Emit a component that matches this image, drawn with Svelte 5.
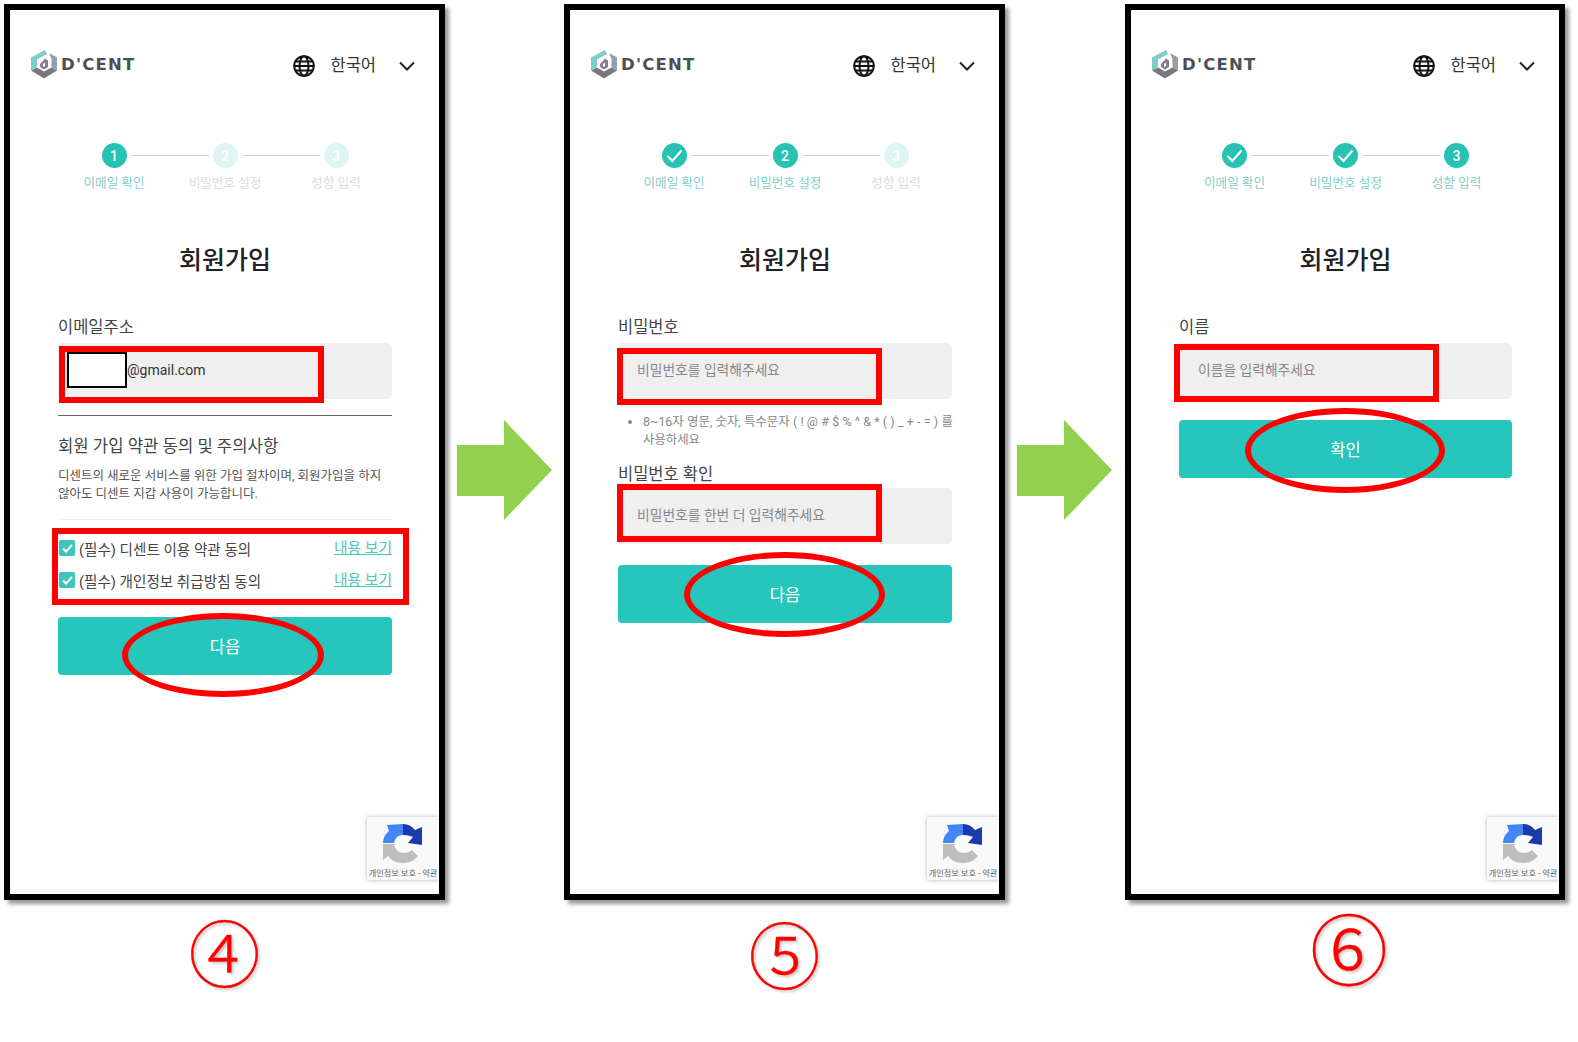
<script>
  const steps = ["이메일 확인", "비밀번호 설정", "성함 입력"];
</script>

{#snippet logo()}
  <div class="logo">
    <svg width="28" height="30" viewBox="0 0 28 30">
      <polygon points="1,8.5 15,1 17,5 7,10.5 7,18 1,21.5" fill="#7fcdc6" />
      <polygon points="19,4 27,8.5 27,21.5 21.5,18.5 21.5,10" fill="#9a9ca0" />
      <polygon points="1,21.5 7,18.5 14,22.5 21.5,18.5 27,21.5 14,29.5" fill="#77797e" />
      <polygon points="10,15 15,9.5 18,11.5 18,18 14,20.5 10,18" fill="#808287" />
      <polygon points="13,15 15,13.5 15,17 13,18" fill="#fff" />
    </svg>
    <span class="wordmark">D'CENT</span>
  </div>
{/snippet}

{#snippet globe()}
  <svg class="globe" width="22" height="22" viewBox="0 0 22 22" fill="none" stroke="#111" stroke-width="2">
    <circle cx="11" cy="11" r="9.8" />
    <ellipse cx="11" cy="11" rx="4.5" ry="9.8" />
    <path d="M1.5 11h19M3 6.5h16M3 15.5h16" />
  </svg>
{/snippet}

{#snippet header()}
  <header class="top">
    {@render logo()}
    <div class="lang">
      {@render globe()}
      <span class="lang-name">한국어</span>
      <svg width="16" height="10" viewBox="0 0 16 10" fill="none" stroke="#222" stroke-width="2">
        <path d="M1 1.5l7 7 7-7" />
      </svg>
    </div>
  </header>
{/snippet}

{#snippet stepper(current)}
  <div class="track">
    {#each steps as _, i}
      {#if i > 0}<span class="line"></span>{/if}
      <span class="dot" class:on={i <= current} class:off={i > current}>
        {#if i < current}
          <svg width="17" height="14" viewBox="0 0 17 14" fill="none" stroke="#fff" stroke-width="2.2">
            <path d="M1.5 7l5 5 9-10.5" />
          </svg>
        {:else}
          {i + 1}
        {/if}
      </span>
    {/each}
  </div>
  <div class="step-names">
    {#each steps as name, i}
      <span class:lit={i <= current}>{name}</span>
    {/each}
  </div>
  <h1>회원가입</h1>
{/snippet}

{#snippet recaptcha()}
  <div class="badge">
    <svg width="40" height="40" viewBox="0 0 40 40">
      <path d="M20 0C25 0 29 2 32 6L39 3V21L25 19L30 13C28 12 25 11 20 11Z" fill="#1c3aa9" />
      <path d="M20 0V11C15 11 12 14 11 19H0C0 14 2 10 6 7L4 1Z" fill="#4285f4" />
      <path d="M0 20H11C12 26 16 29 21 29C24 29 27 28 29 26L35 32C31 37 26 39 20 39C13 39 8 36 5 32L0 36Z" fill="#bdbdbd" />
      <path d="M20 11l-3 4 3 2 3-2z" fill="#fff" />
    </svg>
    <span>개인정보 보호 - 약관</span>
  </div>
{/snippet}

{#snippet arrow()}
  <div class="arrow">
    <svg width="96" height="100" viewBox="0 0 96 100">
      <polygon points="0,25 47,25 47,0 95,50 47,100 47,76 0,76" fill="#92d050" />
    </svg>
  </div>
{/snippet}

<div class="sheet">
  <!-- step 4 -->
  <section class="figure">
    <div class="screen">
      {@render header()}
      <div class="body">
        {@render stepper(0)}
        <label class="label" for="mail">이메일주소</label>
        <input id="mail" class="field email" value="@gmail.com" />
        <hr class="rule" />
        <h2>회원 가입 약관 동의 및 주의사항</h2>
        <p class="notice">디센트의 새로운 서비스를 위한 가입 절차이며, 회원가입을 하지<br />않아도 디센트 지갑 사용이 가능합니다.</p>
        <hr class="rule light" />
        <div class="agree first">
          <span class="check"><svg width="11" height="9" viewBox="0 0 11 9" fill="none" stroke="#fff" stroke-width="2"><path d="M1 4.5l3 3 6-6.5" /></svg></span>
          <span class="agree-text">(필수) 디센트 이용 약관 동의</span>
          <a href="#terms">내용 보기</a>
        </div>
        <div class="agree">
          <span class="check"><svg width="11" height="9" viewBox="0 0 11 9" fill="none" stroke="#fff" stroke-width="2"><path d="M1 4.5l3 3 6-6.5" /></svg></span>
          <span class="agree-text">(필수) 개인정보 취급방침 동의</span>
          <a href="#privacy">내용 보기</a>
        </div>
        <button>다음</button>
      </div>
      {@render recaptcha()}
      <div class="mark a1"></div>
      <div class="redact"></div>
      <div class="mark a2"></div>
      <div class="ring a3"></div>
    </div>
    <div class="num n4">④</div>
  </section>

  {@render arrow()}

  <!-- step 5 -->
  <section class="figure">
    <div class="screen">
      {@render header()}
      <div class="body">
        {@render stepper(1)}
        <label class="label" for="pw">비밀번호</label>
        <input id="pw" class="field" placeholder="비밀번호를 입력해주세요" />
        <ul class="hint">
          <li>8~16자 영문, 숫자, 특수문자 ( ! @ # $ % ^ & * ( ) _ + - = ) 를<br />사용하세요</li>
        </ul>
        <label class="label second" for="pw2">비밀번호 확인</label>
        <input id="pw2" class="field" placeholder="비밀번호를 한번 더 입력해주세요" />
        <button>다음</button>
      </div>
      {@render recaptcha()}
      <div class="mark b1"></div>
      <div class="mark b2"></div>
      <div class="ring b3"></div>
    </div>
    <div class="num n5">⑤</div>
  </section>

  {@render arrow()}

  <!-- step 6 -->
  <section class="figure last">
    <div class="screen">
      {@render header()}
      <div class="body">
        {@render stepper(2)}
        <label class="label" for="name">이름</label>
        <input id="name" class="field" placeholder="이름을 입력해주세요" />
        <button>확인</button>
      </div>
      {@render recaptcha()}
      <div class="mark c1"></div>
      <div class="ring c2"></div>
    </div>
    <div class="num n6">⑥</div>
  </section>
</div>

<style>
  :global(body) {
    background: #fff;
  }
  .sheet {
    display: flex;
    align-items: flex-start;
    width: 1578px;
    height: 1042px;
    padding: 4px 0 0 4px;
    box-sizing: border-box;
    overflow: hidden;
    font-family: Roboto, "Noto Sans CJK KR", sans-serif;
    color: #444;
  }
  .figure {
    width: 441px;
    flex: none;
  }
  .figure.last {
    width: 440px;
    margin-left: 1px;
  }
  .screen {
    position: relative;
    height: 896px;
    box-sizing: border-box;
    border: 6px solid #000;
    background: #fff;
    box-shadow: 4px 4px 4px rgba(0, 0, 0, 0.4);
  }
  .arrow {
    width: 119px;
    flex: none;
    padding: 416px 0 0 12px;
    box-sizing: border-box;
  }
  .arrow svg {
    display: block;
  }

  .top {
    display: flex;
    justify-content: space-between;
    align-items: center;
    height: 28px;
    margin-top: 40px;
    padding: 0 24px 0 20px;
  }
  .logo {
    display: flex;
    align-items: center;
    gap: 3px;
  }
  .logo svg {
    display: block;
  }
  .wordmark {
    font-family: "DejaVu Sans", sans-serif;
    font-size: 16.5px;
    font-weight: 700;
    letter-spacing: 1.2px;
    color: #4c4e56;
  }
  .lang {
    display: flex;
    align-items: center;
    padding-top: 3px;
  }
  .globe {
    display: block;
  }
  .lang-name {
    font-size: 16.5px;
    line-height: 22px;
    margin: 1px 23px 0 15px;
    color: #333;
  }

  .body {
    padding: 0 47px 0 48px;
  }
  .track {
    display: flex;
    justify-content: center;
    align-items: center;
    gap: 4px;
    margin-top: 65px;
  }
  .dot {
    width: 25px;
    height: 25px;
    border-radius: 50%;
    display: flex;
    align-items: center;
    justify-content: center;
    font-size: 14px;
    font-weight: 500;
    color: #fff;
    flex: none;
  }
  .dot.on {
    background: #26c3b5;
  }
  .dot.off {
    background: #def5f2;
  }
  .line {
    width: 78px;
    height: 1px;
    background: #d0d0d0;
  }
  .step-names {
    display: grid;
    grid-template-columns: repeat(3, 111px);
    justify-content: center;
    margin-top: 6px;
    font-size: 12.6px;
    line-height: 18px;
    text-align: center;
    color: #dbdbdb;
    white-space: nowrap;
  }
  .step-names .lit {
    color: #7fcfc7;
  }
  h1 {
    margin: 51px 0 0;
    font-size: 25px;
    line-height: 36px;
    font-weight: 500;
    text-align: center;
    color: #222;
  }
  .label {
    display: block;
    margin-top: 37px;
    margin-bottom: 3px;
    font-size: 16.5px;
    line-height: 24px;
    color: #444;
  }
  .label.second {
    margin-top: 14px;
    margin-bottom: 1px;
  }
  .field {
    display: block;
    width: 100%;
    height: 56px;
    box-sizing: border-box;
    border: 0;
    border-radius: 5px;
    padding: 0 19px 2px;
    background: #efefef;
    font: inherit;
    font-size: 13.8px;
    color: #333;
    outline: none;
  }
  .field::placeholder {
    color: #888;
    opacity: 1;
  }
  .field.email {
    padding-left: 69px;
    font-size: 14px;
  }
  .rule {
    margin: 16px 0 0;
    border: 0;
    height: 1px;
    background: #666;
  }
  .rule.light {
    margin-top: 16px;
    background: #eee;
  }
  h2 {
    margin: 19px 0 0;
    font-size: 16.7px;
    line-height: 24px;
    font-weight: 400;
    color: #444;
  }
  .notice {
    margin: 8px 0 0;
    font-size: 12.5px;
    line-height: 18px;
    color: #555;
    white-space: nowrap;
  }
  .agree {
    display: flex;
    align-items: center;
    height: 32px;
    font-size: 14.6px;
    color: #444;
  }
  .agree.first {
    margin-top: 12px;
  }
  .check {
    width: 16px;
    height: 16px;
    border-radius: 2px;
    background: #3cc7bc;
    display: flex;
    align-items: center;
    justify-content: center;
    margin: 0 4px 0 1px;
    flex: none;
  }
  .agree-text {
    flex: 1;
  }
  .agree a {
    color: #4cc4b8;
    font-size: 14.8px;
    position: relative;
    top: -2px;
  }
  button {
    display: block;
    width: 100%;
    height: 58px;
    margin-top: 21px;
    border: 0;
    border-radius: 4px;
    background: #26c6bc;
    color: #fff;
    font: inherit;
    font-size: 16.5px;
  }
  .hint {
    margin: 14px 0 0;
    padding: 0 0 0 25px;
    font-size: 12.4px;
    line-height: 18px;
    word-spacing: 0.2px;
    white-space: nowrap;
    color: #888;
  }
  .badge {
    position: absolute;
    right: 0;
    bottom: 14px;
    width: 72px;
    height: 63px;
    box-sizing: border-box;
    padding-top: 7px;
    background: #f9f9f9;
    box-shadow: 0 0 4px rgba(0, 0, 0, 0.3);
    border-radius: 2px 0 0 2px;
    display: flex;
    flex-direction: column;
    align-items: center;
    overflow: hidden;
  }
  .badge svg {
    display: block;
    flex: none;
  }
  .badge span {
    font-size: 8.2px;
    line-height: 12px;
    margin-top: 3px;
    color: #666;
    white-space: nowrap;
  }

  /* annotations drawn on top of the screenshots */
  .mark,
  .ring,
  .redact {
    position: absolute;
    box-sizing: border-box;
  }
  .mark {
    border: 6px solid #f00;
  }
  .ring {
    border: 6px solid #f00;
    border-radius: 50%;
  }
  .redact {
    left: 57px;
    top: 342px;
    width: 60px;
    height: 36px;
    background: #fff;
    border: 2px solid #000;
  }
  .a1 { left: 49px; top: 336px; width: 265px; height: 57px; }
  .a2 { left: 42px; top: 518px; width: 357px; height: 77px; }
  .a3 { left: 112px; top: 603px; width: 202px; height: 84px; }
  .b1 { left: 47px; top: 338px; width: 265px; height: 57px; }
  .b2 { left: 47px; top: 474px; width: 265px; height: 58px; }
  .b3 { left: 114px; top: 542px; width: 201px; height: 85px; }
  .c1 { left: 43px; top: 334px; width: 265px; height: 58px; }
  .c2 { left: 114px; top: 398px; width: 200px; height: 85px; }

  .num {
    color: #f00;
    text-align: center;
    font-size: 72px;
    line-height: 72px;
    font-weight: 300;
    -webkit-text-stroke: 0.4px #f00;
    text-shadow: 2px 2px 3px rgba(0, 0, 0, 0.25);
    font-family: "Noto Sans CJK KR", sans-serif;
  }
  .n4 { margin-top: 14px; }
  .n5 { margin-top: 16px; }
  .n6 { margin-top: 7px; font-size: 78px; line-height: 78px; padding-left: 8px; }
</style>
